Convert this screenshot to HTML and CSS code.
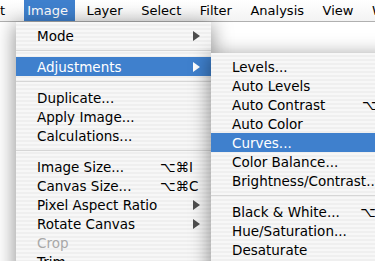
FILE: index.html
```html
<!DOCTYPE html>
<html lang="en">
  <head>
    <meta charset="UTF-8" />
    <title>Image menu</title>
    <link rel="stylesheet" href="styles.css">
  </head>
  <body>
    <nav class="menubar">
      <span class="menubar__item">Edit</span>
      <span class="menubar__item menubar__item--open">Image</span>
      <span class="menubar__item">Layer</span>
      <span class="menubar__item">Select</span>
      <span class="menubar__item">Filter</span>
      <span class="menubar__item">Analysis</span>
      <span class="menubar__item">View</span>
      <span class="menubar__item">Window</span>
    </nav>

    <div class="menu menu--image">
      <div class="menu__row"><span class="menu__label">Mode</span><span class="menu__key"></span><span class="menu__arrow"></span></div>
      <div class="menu__sep"></div>
      <div class="menu__row menu__row--active"><span class="menu__label">Adjustments</span><span class="menu__key"></span><span class="menu__arrow"></span></div>
      <div class="menu__sep"></div>
      <div class="menu__row"><span class="menu__label">Duplicate...</span></div>
      <div class="menu__row"><span class="menu__label">Apply Image...</span></div>
      <div class="menu__row"><span class="menu__label">Calculations...</span></div>
      <div class="menu__sep"></div>
      <div class="menu__row"><span class="menu__label">Image Size...</span><span class="menu__key">⌥⌘I</span></div>
      <div class="menu__row"><span class="menu__label">Canvas Size...</span><span class="menu__key">⌥⌘C</span></div>
      <div class="menu__row"><span class="menu__label">Pixel Aspect Ratio</span><span class="menu__key"></span><span class="menu__arrow"></span></div>
      <div class="menu__row"><span class="menu__label">Rotate Canvas</span><span class="menu__key"></span><span class="menu__arrow"></span></div>
      <div class="menu__row menu__row--disabled"><span class="menu__label">Crop</span></div>
      <div class="menu__row"><span class="menu__label">Trim...</span></div>
    </div>

    <div class="menu menu--adjust">
      <div class="menu__row"><span class="menu__label">Levels...</span><span class="menu__key">⌘L</span></div>
      <div class="menu__row"><span class="menu__label">Auto Levels</span><span class="menu__key">⇧⌘L</span></div>
      <div class="menu__row"><span class="menu__label">Auto Contrast</span><span class="menu__key">⌥⇧⌘L</span></div>
      <div class="menu__row"><span class="menu__label">Auto Color</span><span class="menu__key">⇧⌘B</span></div>
      <div class="menu__row menu__row--active"><span class="menu__label">Curves...</span><span class="menu__key">⌘M</span></div>
      <div class="menu__row"><span class="menu__label">Color Balance...</span><span class="menu__key">⌘B</span></div>
      <div class="menu__row"><span class="menu__label">Brightness/Contrast...</span></div>
      <div class="menu__sep"></div>
      <div class="menu__row"><span class="menu__label">Black &amp; White...</span><span class="menu__key">⌥⇧⌘B</span></div>
      <div class="menu__row"><span class="menu__label">Hue/Saturation...</span><span class="menu__key">⌘U</span></div>
      <div class="menu__row"><span class="menu__label">Desaturate</span><span class="menu__key">⇧⌘U</span></div>
    </div>
  </body>
</html>
```

FILE: styles.css
```css
* {
  box-sizing: border-box;
}

html,
body {
  margin: 0;
  height: 261px;
  overflow: hidden;
}

body {
  position: relative;
  background: #ffffff;
  font-family: "DejaVu Sans", sans-serif;
  color: #000;
}

.menubar {
  display: flex;
  gap: 4.5px;
  height: 22px;
  margin-left: -27px;
  background: linear-gradient(#ffffff, #f3f3f3);
  border-bottom: 1px solid #b0b0b0;
  font-size: 13px;
  white-space: nowrap;
}

.menubar__item {
  padding: 0 7px;
  line-height: 21px;
}

.menubar__item:first-child {
  padding-right: 14.5px;
}

.menubar__item--open {
  padding: 0 7px 0 3px;
  background: #3f80cd;
  color: #fff;
}

.menu {
  position: absolute;
  padding-top: 4px;
  height: 300px;
  font-size: 13.5px;
  white-space: nowrap;
  background: repeating-linear-gradient(#f7f7f7 0 2px, #efefef 2px 4px);
  box-shadow: 0 4px 18px 2px rgba(0, 0, 0, 0.4);
}

.menu--image {
  top: 22px;
  left: 16px;
  width: 195px;
}

.menu--adjust {
  top: 53px;
  left: 211px;
  width: 219px;
}

.menu__row {
  display: flex;
  align-items: center;
  height: 19px;
  padding-left: 21px;
}

.menu__label {
  flex: 0 0 auto;
}

.menu--image .menu__label {
  width: 123px;
}

.menu__key {
  flex: 1;
}

.menu--adjust .menu__row {
  padding-right: 20px;
}

.menu--adjust .menu__key {
  text-align: right;
}

.menu__arrow {
  width: 0;
  height: 0;
  margin-right: 11px;
  border-left: 7px solid #4d4d4d;
  border-top: 5px solid transparent;
  border-bottom: 5px solid transparent;
}

.menu__row--active {
  background: #3f80cd;
  color: #fff;
}

.menu__row--active .menu__arrow {
  border-left-color: #fff;
}

.menu__row--disabled {
  color: #a8a8a8;
}

.menu__sep {
  height: 1px;
  margin: 5px 0 6px;
  background: #d6d6d6;
}
```
